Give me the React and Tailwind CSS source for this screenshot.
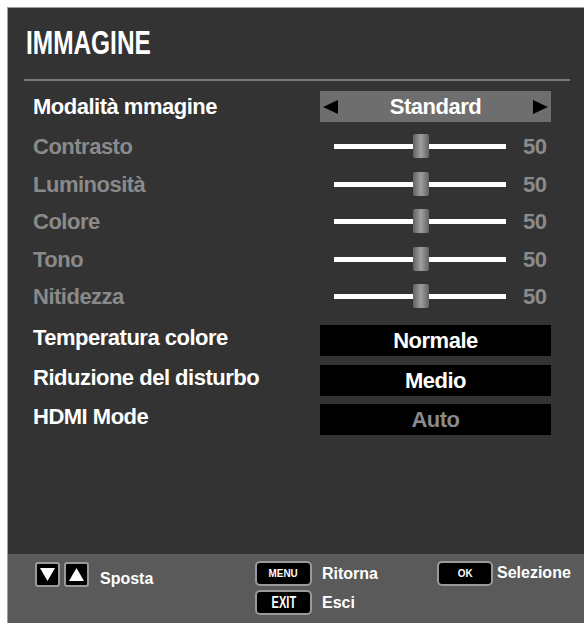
import React from 'react';

const font = { fontFamily: '"Liberation Sans", Arial, sans-serif' };

function Slider({ value }) {
  return (
    <div className="flex items-center">
      <div className="relative ml-[14px] h-[5px] w-[172px] bg-white">
        <div className="absolute left-[79px] top-[-10px] h-[24px] w-[16px] rounded-[2px] bg-gradient-to-r from-[#626262] via-[#a0a0a0] to-[#626262]" />
      </div>
      <span className="ml-[17px] text-[22px] font-bold tracking-[-0.5px] text-[#8a8a8a]">{value}</span>
    </div>
  );
}

function Box({ children, dim }) {
  return (
    <div
      className={`flex h-[31px] w-[231px] items-center justify-center bg-black text-[22px] font-bold tracking-[-0.5px] ${
        dim ? 'text-[#8a8a8a]' : 'text-white'
      }`}
    >
      {children}
    </div>
  );
}

function Triangle({ up }) {
  return (
    <div className="flex h-[25px] w-[25px] items-center justify-center rounded-[3px] border-2 border-[#9a9a9a] bg-black">
      <svg width="15" height="13" viewBox="0 0 15 13">
        {up ? <polygon points="7.5,0 15,13 0,13" fill="#fff" /> : <polygon points="0,0 15,0 7.5,13" fill="#fff" />}
      </svg>
    </div>
  );
}

function Key({ children, wide = 57, small }) {
  return (
    <div
      className="flex h-[25px] items-center justify-center rounded-[5px] border-2 border-[#9a9a9a] bg-black text-white"
      style={{ width: wide }}
    >
      <span className={small ? 'scale-x-90 text-[11px]' : 'scale-x-[0.65] text-[17px]'}>{children}</span>
    </div>
  );
}

const sliders = ['Contrasto', 'Luminosità', 'Colore', 'Tono', 'Nitidezza'];

export default function App() {
  return (
    <div className="h-[623px] w-[584px] overflow-hidden bg-white pl-[7px] pt-[7px]" style={font}>
      <div className="flex h-full flex-col border-l border-t border-[#a0a0a0] bg-[#333333]">
        <div className="h-[71px] pl-[18px] pt-[18px]">
          <h1 className="inline-block origin-left scale-x-[0.74] text-[33px] font-bold leading-[34px] text-white">
            IMMAGINE
          </h1>
        </div>
        <div className="ml-[16px] h-[2px] w-[546px] bg-[#7a7a7a]" />

        <div className="flex flex-col pl-[25px] pt-[6px]">
          <div className="flex h-[39px] items-center">
            <span className="w-[287px] text-[22px] font-bold tracking-[-0.5px] text-white">Modalità mmagine</span>
            <div className="flex h-[31px] w-[231px] items-center justify-between bg-[#6e6e6e] px-[3px]">
              <svg width="15" height="14" viewBox="0 0 15 14">
                <polygon points="15,0 15,14 0,7" fill="#000" />
              </svg>
              <span className="text-[22px] font-bold tracking-[-0.5px] text-white">Standard</span>
              <svg width="15" height="14" viewBox="0 0 15 14">
                <polygon points="0,0 15,7 0,14" fill="#000" />
              </svg>
            </div>
          </div>

          <div className="mt-[2px] flex flex-col">
            {sliders.map((label) => (
              <div key={label} className="flex h-[37.5px] items-center">
                <span className="w-[287px] text-[22px] font-bold tracking-[-0.5px] text-[#8a8a8a]">{label}</span>
                <Slider value="50" />
              </div>
            ))}
          </div>

          <div className="mt-[5.5px] flex flex-col">
            {[
              ['Temperatura colore', 'Normale', false],
              ['Riduzione del disturbo', 'Medio', false],
              ['HDMI Mode', 'Auto', true],
            ].map(([label, value, dim]) => (
              <div key={label} className="flex h-[39.5px] items-center">
                <span className="w-[287px] pb-[6px] text-[22px] font-bold tracking-[-0.5px] text-white">{label}</span>
                <Box dim={dim}>{value}</Box>
              </div>
            ))}
          </div>
        </div>

        <div className="mt-auto flex h-[69px] bg-[#5a5a5a] pl-[27px] pt-[7px] text-[16px] font-bold text-white">
          <div className="flex w-[220px] items-start pt-[1px]">
            <Triangle />
            <div className="ml-[4px]">
              <Triangle up />
            </div>
            <span className="ml-[11px] pt-[7px] leading-[20px]">Sposta</span>
          </div>
          <div className="flex w-[182px] flex-col gap-[4px]">
            <div className="flex items-center">
              <Key small>MENU</Key>
              <span className="ml-[10px] leading-[20px]">Ritorna</span>
            </div>
            <div className="flex items-center">
              <Key>EXIT</Key>
              <span className="ml-[10px] leading-[20px]">Esci</span>
            </div>
          </div>
          <div className="flex items-start">
            <Key small wide={56}>OK</Key>
            <span className="ml-[4px] pt-[2px] leading-[20px]">Selezione</span>
          </div>
        </div>
      </div>
    </div>
  );
}
